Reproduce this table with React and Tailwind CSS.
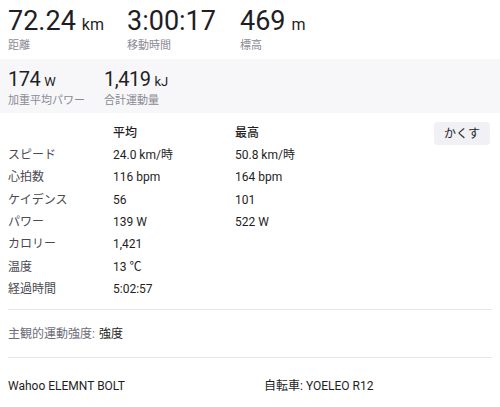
const font = { fontFamily: 'Roboto, "Noto Sans CJK JP", sans-serif' };

const rows = [
  ['スピード', '24.0 km/時', '50.8 km/時'],
  ['心拍数', '116 bpm', '164 bpm'],
  ['ケイデンス', '56', '101'],
  ['パワー', '139 W', '522 W'],
  ['カロリー', '1,421', ''],
  ['温度', '13 ℃', ''],
  ['経過時間', '5:02:57', ''],
];

function BigStat({ value, unit, label, width }) {
  return (
    <div className={width}>
      <div className="flex items-baseline leading-none text-[#1e1e24]">
        <span className="text-[27px]">{value}</span>
        {unit && <span className="ml-1.5 text-[16px]">{unit}</span>}
      </div>
      <div className="mt-[5px] text-[11px] leading-none text-[#8a8a93]">{label}</div>
    </div>
  );
}

function SmallStat({ value, unit, label, width }) {
  return (
    <div className={width}>
      <div className="flex items-baseline leading-none text-[#1e1e24]">
        <span className="text-[20px] tracking-tight">{value}</span>
        <span className="ml-1 text-[13px]">{unit}</span>
      </div>
      <div className="mt-[6px] text-[11px] leading-none text-[#8a8a93]">{label}</div>
    </div>
  );
}

export default function App() {
  return (
    <div className="w-[500px] h-[407px] bg-white overflow-hidden" style={font}>
      {/* top stats */}
      <div className="flex px-2 pt-[8px] h-[59px]">
        <BigStat value="72.24" unit="km" label="距離" width="w-[119px]" />
        <BigStat value="3:00:17" label="移動時間" width="w-[113px]" />
        <BigStat value="469" unit="m" label="標高" />
      </div>

      {/* power summary */}
      <div className="flex bg-[#f7f7fa] px-2 pt-[10px] h-[54px]">
        <SmallStat value="174" unit="W" label="加重平均パワー" width="w-[96px]" />
        <SmallStat value="1,419" unit="kJ" label="合計運動量" />
      </div>

      {/* detail table */}
      <div className="relative px-2 pt-[9px]">
        <button className="absolute right-[10px] top-[9px] h-[23px] px-[10px] rounded bg-[#f0f0f5] text-[12px] text-[#1e1e24]">
          かくす
        </button>
        <div className="grid grid-cols-[105px_122px_1fr] text-[12px] leading-none text-[#1e1e24]">
          <div className="h-[22px] flex items-center" />
          <div className="h-[22px] flex items-center font-medium">平均</div>
          <div className="h-[22px] flex items-center font-medium">最高</div>
          {rows.map(([label, avg, max]) => (
            <div key={label} className="contents">
              <div className="h-[22.3px] flex items-center text-[#4a4a52]">{label}</div>
              <div className="h-[22.3px] flex items-center">{avg}</div>
              <div className="h-[22.3px] flex items-center">{max}</div>
            </div>
          ))}
        </div>
      </div>

      <div className="mx-2 mt-[9px] border-t border-[#e6e6eb]" />
      <div className="px-2 h-[47px] flex items-center text-[12px] text-[#6d6d78]">
        主観的運動強度: <span className="ml-1 text-[#1e1e24]">強度</span>
      </div>
      <div className="mx-2 border-t border-[#e6e6eb]" />

      <div className="flex px-2 pt-[19px] text-[12px] text-[#1e1e24]">
        <div className="w-[256px]">Wahoo ELEMNT BOLT</div>
        <div>自転車: YOELEO R12</div>
      </div>
    </div>
  );
}
